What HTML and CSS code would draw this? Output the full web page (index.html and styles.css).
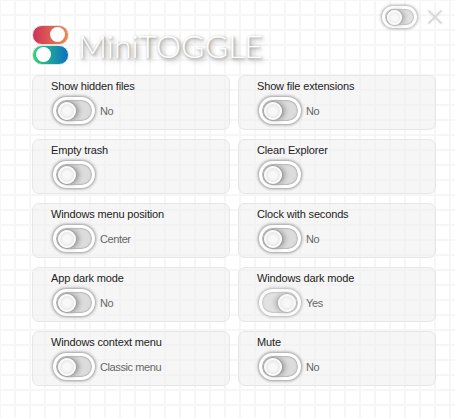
FILE: index.html
```html
<!DOCTYPE html>
<html lang="en">
<head>
<meta charset="utf-8">
<title>MiniTOGGLE</title>
<link rel="stylesheet" href="styles.css">
</head>
<body>
<div class="window-controls">
  <span class="toggle toggle-small"><span class="knob"></span></span>
  <svg class="close" width="16" height="16" viewBox="0 0 16 16"><path d="M1.5 1.5 14.5 14.5M14.5 1.5 1.5 14.5" /></svg>
</div>
<header class="brand">
  <div class="logo">
    <span class="logo-pill red"><span class="logo-knob"></span></span>
    <span class="logo-pill blue"><span class="logo-knob"></span></span>
  </div>
  <h1 class="title">MiniTOGGLE</h1>
</header>
<main class="grid">
  <section class="card"><div class="label">Show hidden files</div><div class="row"><span class="toggle"><span class="knob"></span></span><span class="value">No</span></div></section>
  <section class="card"><div class="label">Show file extensions</div><div class="row"><span class="toggle"><span class="knob"></span></span><span class="value">No</span></div></section>
  <section class="card"><div class="label">Empty trash</div><div class="row"><span class="toggle"><span class="knob"></span></span></div></section>
  <section class="card"><div class="label">Clean Explorer</div><div class="row"><span class="toggle"><span class="knob"></span></span></div></section>
  <section class="card"><div class="label">Windows menu position</div><div class="row"><span class="toggle"><span class="knob"></span></span><span class="value">Center</span></div></section>
  <section class="card"><div class="label">Clock with seconds</div><div class="row"><span class="toggle"><span class="knob"></span></span><span class="value">No</span></div></section>
  <section class="card"><div class="label">App dark mode</div><div class="row"><span class="toggle"><span class="knob"></span></span><span class="value">No</span></div></section>
  <section class="card"><div class="label">Windows dark mode</div><div class="row"><span class="toggle on"><span class="knob"></span></span><span class="value">Yes</span></div></section>
  <section class="card"><div class="label">Windows context menu</div><div class="row"><span class="toggle"><span class="knob"></span></span><span class="value">Classic menu</span></div></section>
  <section class="card"><div class="label">Mute</div><div class="row"><span class="toggle"><span class="knob"></span></span><span class="value">No</span></div></section>
</main>
</body>
</html>
```
FILE: styles.css
```css
* { box-sizing: border-box; }
html, body { margin: 0; height: 100%; overflow: hidden; }
body {
  position: relative;
  width: 455px;
  height: 418px;
  padding: 24px 19px 0 32px;
  background-color: #fff;
  background-image:
    linear-gradient(to right, #f6f6f6 2px, transparent 2px),
    linear-gradient(to bottom, #f6f6f6 2px, transparent 2px);
  background-size: 15px 15px;
  background-position: 14px 14px;
  font-family: "Liberation Sans", Arial, sans-serif;
  font-size: 11px;
  color: #222;
}
.window-controls {
  position: absolute;
  top: 6px;
  right: 12px;
  display: flex;
  align-items: flex-start;
  gap: 10px;
}
.close { stroke: #d6d6d6; stroke-width: 1.6; fill: none; margin-top: 3px; filter: drop-shadow(0 0 1px #e0e0e0); }
.brand { display: flex; align-items: center; gap: 9px; height: 41px; margin-bottom: 10px; }
.logo { display: flex; flex-direction: column; gap: 0; width: 37px; }
.logo-pill {
  display: flex;
  align-items: center;
  width: 37px;
  height: 20px;
  padding: 2px 3px;
  border-radius: 10px;
  border: 1px solid #e2e2e2;
}
.logo-pill.red { justify-content: flex-end; background: linear-gradient(to right, #cf3057, #ee8a4e); }
.logo-pill.blue { background: linear-gradient(to right, #2ed573, #0a70c4); }
.logo-knob { width: 15px; height: 15px; border-radius: 50%; background: #fff; }
.title {
  margin: 2px 0 0;
  font-family: Lato, "Liberation Sans", Arial, sans-serif;
  font-size: 32px;
  line-height: 36px;
  font-weight: 300;
  color: #fff;
  text-shadow: 1px 1px 3px #888, 3px 3px 5px #aaa;
}
.grid {
  display: grid;
  grid-template-columns: 198px 198px;
  column-gap: 8px;
  row-gap: 9px;
}
.card {
  height: 55px;
  padding: 3px 0 0 18px;
  border: 1px solid #e6e6e6;
  border-radius: 7px;
  background: rgba(240, 240, 240, 0.6);
}
.label { line-height: 15px; letter-spacing: -0.15px; color: #222; }
.row { display: flex; align-items: center; gap: 5px; margin-top: 3px; padding-left: 2px; }
.value { color: #666; letter-spacing: -0.4px; }
.toggle {
  display: flex;
  align-items: center;
  width: 42px;
  height: 27px;
  padding: 3px;
  border-radius: 14px;
  background: #dcdcdc;
  border: 3px solid #fff;
  box-shadow: 0 0 3px 1px #999, inset 0 0 2px #666;
}
.toggle.on { justify-content: flex-end; opacity: 0.75; }
.knob {
  width: 18px;
  height: 18px;
  margin: -3px -1px;
  border-radius: 50%;
  background: radial-gradient(circle, #f8f8f8 35%, #e8e8e8 70%);
  border: 2px solid #fafafa;
  box-shadow: 0 0 1px 1px #a0a0a0, 3px 0 5px #999;
}
.toggle.on .knob { box-shadow: 0 0 1px 1px #a0a0a0, -3px 0 5px #999; }
.toggle-small { width: 35px; height: 22px; opacity: 0.8; }
.toggle-small .knob { width: 15px; height: 15px; }
```
